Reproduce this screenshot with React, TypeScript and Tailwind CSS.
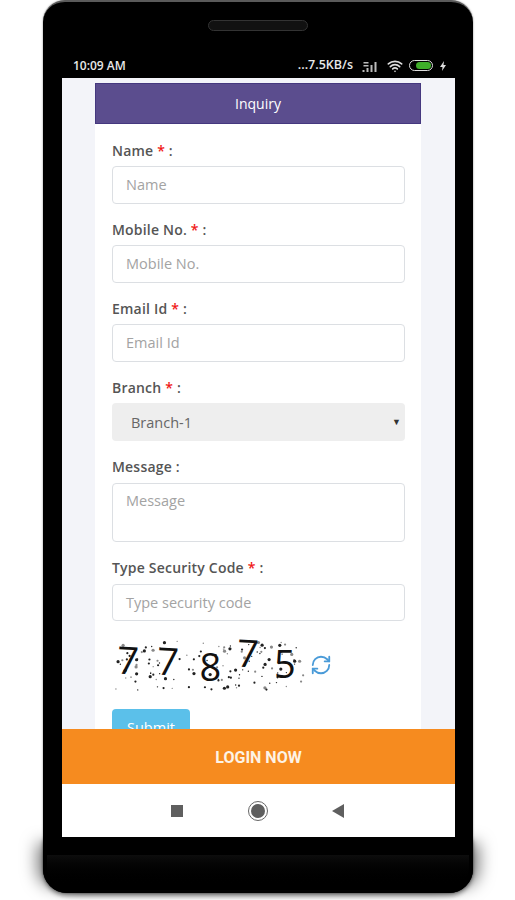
import { RefreshCw, Wifi } from "lucide-react";
import { clsx } from "clsx";

const SANS = "font-['Open_Sans',sans-serif]";

const FIELDS = [
  { label: "Name", placeholder: "Name" },
  { label: "Mobile No.", placeholder: "Mobile No." },
  { label: "Email Id", placeholder: "Email Id" },
];

// noise behind the captcha digits: [x, y, r]
const NOISE: number[][] = [];
let seed = 4711;
const next = () => {
  seed = (seed * 1103515245 + 12345) % 2147483648;
  return seed / 2147483648;
};
for (let i = 0; i < 130; i++) {
  const x = 3 + next() * 192;
  const y = 4 + next() * 50;
  const pick = next();
  NOISE.push([x, y, pick > 0.8 ? 1.6 : pick > 0.45 ? 1.1 : 0.7]);
}

const DIGITS = [
  { d: "7", cls: "ml-[5px] mt-[-11px] rotate-[3deg]" },
  { d: "7", cls: "ml-[18px] mt-[-9px] rotate-[3deg]" },
  { d: "8", cls: "ml-[21px] mt-[4px]" },
  { d: "7", cls: "ml-[16px] mt-[-24px] rotate-[3deg]" },
  { d: "5", cls: "ml-[15px] mt-[-2px]" },
];

function Label({ text, required = true }: { text: string; required?: boolean }) {
  return (
    <label className="mb-[4px] block h-[24px] text-[14px] font-semibold leading-[26px] tracking-[0.2px] text-[#555]">
      {text}
      {required && <span className="text-[#f01818]"> *</span>} :
    </label>
  );
}

function TextBox({ placeholder, className }: { placeholder: string; className?: string }) {
  return (
    <div className={clsx("flex items-center rounded-[4px] border border-[#dcdfe3] bg-white pl-[13px] text-[14.5px] text-[#a3a3a3]", className ?? "h-[38px]")}>
      {placeholder}
    </div>
  );
}

function StatusBar() {
  return (
    <div className="flex h-[15px] items-center justify-between pl-[30px] pr-[27px] text-[12px] font-semibold text-[#e8e8e8]">
      <span>10:09 AM</span>
      <div className="flex items-center">
        <span className="text-[12.5px]">...7.5KB/s</span>
        <svg width="18" height="12" viewBox="0 0 17 12" className="ml-[8px] text-[#bbb]">
          <path d="M1 10h2v2H1zM5 8h2v4H5zM9 5h2v7H9zM13 2h2v10h-2zM2 2h5v1.500H2zM2 5h5v1.500H2z" fill="currentColor" />
        </svg>
        <Wifi className="ml-[7px] h-[16px] w-[18px] text-[#ddd]" strokeWidth={2.5} />
        <div className="ml-[5px] flex h-[11px] w-[24px] items-center justify-end rounded-full border border-[#ddd] p-[1px]">
          <div className="h-full w-[15px] rounded-full bg-[#3fae2a]" />
        </div>
        <svg width="6" height="10" viewBox="0 0 6 10" className="ml-[7px]">
          <path d="M4 0 0 6h2.500L2 10l4-6H3.500z" fill="#ddd" />
        </svg>
      </div>
    </div>
  );
}

function Captcha() {
  return (
    <div className="flex h-[56px] items-center">
      <div className="relative h-[56px] w-[198px]">
        <svg width="198" height="56" className="absolute inset-0">
          {NOISE.map(([x, y, r], i) => (
            <circle key={i} cx={x} cy={y} r={r} fill={i % 3 ? "#222" : "#888"} />
          ))}
        </svg>
        <div className="relative flex h-full items-center text-[38px] font-medium leading-none text-[#111]">
          {DIGITS.map((item, i) => (
            <span key={i} className={item.cls}>
              {item.d}
            </span>
          ))}
        </div>
      </div>
      <RefreshCw className="mt-[1px] h-[22px] w-[22px] text-[#4a9bd8]" strokeWidth={2} />
    </div>
  );
}

export default function App() {
  return (
    <div className={`h-[900px] w-[515px] overflow-hidden bg-white ${SANS}`}>
      <div className="ml-[43px] flex h-[893px] w-[430px] flex-col rounded-t-[22px] rounded-b-[24px] border-t-[2px] border-[#5a5a5a] bg-black pt-[18px] shadow-[0_0_2px_rgba(0,0,0,0.5)]">
        <div className="mx-auto h-[11px] w-[100px] rounded-full border border-[#333] bg-[#111]" />
        <div className="mt-[27px]">
          <StatusBar />
        </div>
        <div className="relative z-10 ml-[19px] mr-[18px] mt-[5px] flex h-[759px] flex-col overflow-hidden bg-white">
          <div className="min-h-0 flex-1 overflow-hidden bg-[#f3f4f9] pl-[33px] pr-[34px] pt-[5px]">
            <div className="flex h-[41px] items-center justify-center border border-[#45387f] bg-[#5b4d8e] text-[14px] text-white">
              Inquiry
            </div>
            <div className="bg-white pl-[17px] pr-[16px] pt-[14px]">
              {FIELDS.map((f) => (
                <div key={f.label} className="mb-[13px]">
                  <Label text={f.label} />
                  <TextBox placeholder={f.placeholder} />
                </div>
              ))}
              <div className="mb-[13px]">
                <Label text="Branch" />
                <div className="flex h-[38px] items-center justify-between rounded-[4px] bg-[#eeeeee] pl-[19px] pr-[4px] pt-[2px] text-[14.5px] text-[#666]">
                  <span>Branch-1</span>
                  <span className="mb-[3px] text-[9px] text-[#333]">▼</span>
                </div>
              </div>
              <div className="mb-[13px]">
                <Label text="Message" required={false} />
                <div className="pt-[1px]">
                  <div className="h-[59px] rounded-[4px] border border-[#dcdfe3] bg-white pl-[13px] pt-[6px] text-[14.5px] text-[#a3a3a3]">
                    Message
                  </div>
                </div>
              </div>
              <div className="mb-[15px]">
                <Label text="Type Security Code" />
                <div className="pt-[1px]">
                  <TextBox placeholder="Type security code" className="h-[37px]" />
                </div>
              </div>
              <Captcha />
              <div className="mt-[17px] flex h-[38px] w-[78px] items-center justify-center rounded-[4px] bg-[#5bc0ea] text-[14.5px] text-white">
                Submit
              </div>
            </div>
          </div>
          <div className="flex h-[55px] shrink-0 items-center justify-center bg-[#f68b1f] pt-[2px] font-['Roboto',sans-serif] text-[16px] font-bold text-[#fdf3e6]">
            LOGIN NOW
          </div>
          <div className="flex h-[53px] shrink-0 items-center justify-center gap-[65px] bg-white pr-[2px]">
            <div className="h-[12px] w-[12px] bg-[#5f5f5f]" />
            <div className="flex h-[20px] w-[20px] items-center justify-center rounded-full border border-[#666]">
              <div className="h-[14px] w-[14px] rounded-full bg-[#5f5f5f]" />
            </div>
            <svg width="12" height="14" viewBox="0 0 12 14" className="ml-[-1px]">
              <path d="M12 0v14L0 7z" fill="#5f5f5f" />
            </svg>
          </div>
        </div>
        <div className="flex h-[56px] shrink-0 flex-col rounded-b-[24px] bg-black px-[4px] pt-[18px] shadow-[-12px_0_16px_-6px_rgba(0,0,0,0.5),12px_0_16px_-6px_rgba(0,0,0,0.5),0_3px_4px_rgba(0,0,0,0.4)]">
          <div className="h-[32px] rounded-b-[20px] bg-gradient-to-b from-[#0d0d0d] to-black" />
        </div>
      </div>
    </div>
  );
}
